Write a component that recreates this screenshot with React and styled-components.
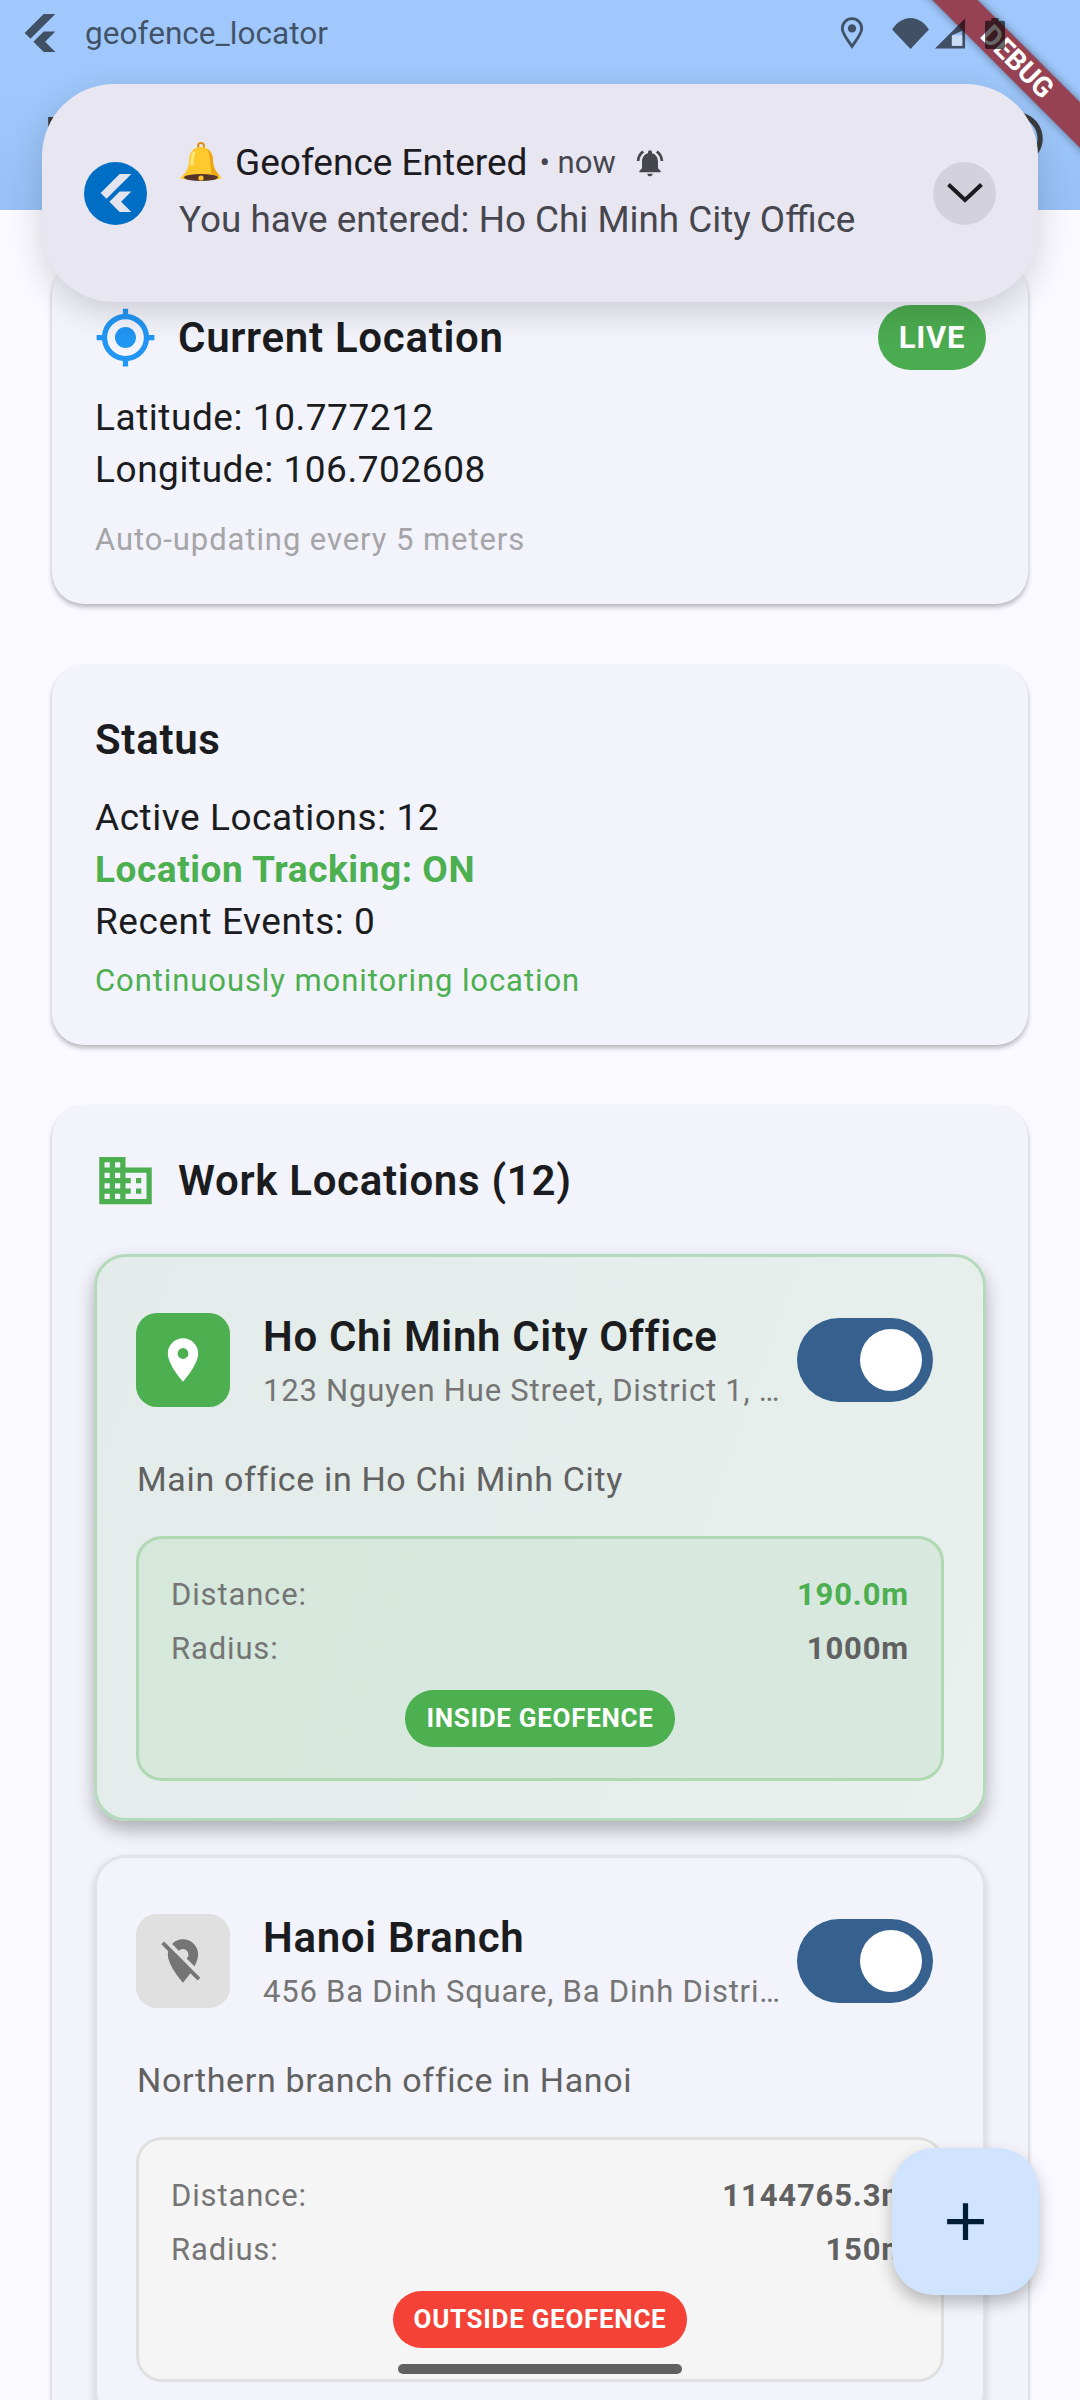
import styled, { createGlobalStyle } from "styled-components";
import {
    MdGpsFixed,
    MdLocationOn,
    MdLocationOff,
    MdBusiness,
    MdNotificationsActive,
    MdAdd,
    MdOutlineInfo,
} from "react-icons/md";

const GlobalStyle = createGlobalStyle`
    html, body {
        margin: 0;
        padding: 0;
        background: #f9f9ff;
        font-family: Roboto, "Noto Sans", sans-serif;
    }
    * {
        box-sizing: border-box;
    }
`;

const Screen = styled.div`
    position: relative;
    width: 1080px;
    height: 2400px;
    overflow: hidden;
    background: #f9f9ff;
`;

const Header = styled.header`
    background: linear-gradient(180deg, #a0c8fc 0%, #a0c8fc 40%, #97c1f5 100%);
    height: 210px;
`;

/* system bar is painted over the debug banner, the battery shows it */
const StatusBar = styled.div`
    position: relative;
    z-index: 3;
    display: flex;
    align-items: center;
    height: 66px;
    padding: 0 0 0 21px;
    color: rgba(0, 0, 0, 0.6);
`;

const StatusTitle = styled.span`
    margin-left: 26px;
    font-size: 31.6px;
    flex: 1;
`;

const StatusIcons = styled.div`
    display: flex;
    align-items: center;
    padding-right: 75px;
`;

const AppBar = styled.div`
    display: flex;
    justify-content: space-between;
    align-items: center;
    height: 144px;
    padding: 0 32px 0 44px;
    color: #3a3c40;
    font-size: 58px;
    font-weight: 500;
`;

const Content = styled.main`
    display: flex;
    flex-direction: column;
    gap: 61px;
    padding: 53px 52px 0;
`;

const Card = styled.section`
    background: #f2f3fb;
    border-radius: 32px;
    padding: 42px 42px 42px 43px;
    box-shadow: 0 3px 5px rgba(0, 0, 0, 0.28);
`;

const CardHeader = styled.div`
    display: flex;
    align-items: center;
    height: ${(p) => p.$height || 64}px;
    margin-bottom: ${(p) => p.$gap || 21}px;
`;

const CardTitle = styled.h2`
    margin: 0;
    font-size: 42px;
    font-weight: 600;
    letter-spacing: 0.7px;
    color: #1a1c20;
    flex: 1;
`;

const HeaderIcon = styled.span`
    display: flex;
    justify-content: flex-start;
    width: 84px;
    margin-left: -1px;
    color: ${(p) => p.$color};
    font-size: ${(p) => p.$size}px;
`;

const LivePill = styled.span`
    display: flex;
    align-items: center;
    justify-content: center;
    width: 108px;
    height: 65px;
    border-radius: 33px;
    background: #4bab50;
    color: #fff;
    font-size: 31px;
    font-weight: 700;
    letter-spacing: 0.8px;
`;

const Line = styled.div`
    font-size: 37px;
    line-height: 52px;
    letter-spacing: 0.55px;
    color: ${(p) => p.$color || "#1a1c20"};
    font-weight: ${(p) => (p.$bold ? 700 : 400)};
`;

const SmallLine = styled.div`
    margin-top: ${(p) => p.$top}px;
    font-size: 31px;
    line-height: 44px;
    letter-spacing: 0.92px;
    color: ${(p) => p.$color};
`;

const LocationList = styled.div`
    display: flex;
    flex-direction: column;
    gap: 34px;
    margin-left: -1px;
`;

const LocationCard = styled.article`
    border-radius: 32px;
    padding: 54px 39px 37px;
    border: 3px solid ${(p) => (p.$inside ? "#b5dabb" : "#e2e3e8")};
    background: ${(p) =>
        p.$inside
            ? "linear-gradient(110deg, #e3ecea 0%, #e5eeeb 60%, #e9f0ee 100%)"
            : "#f2f3fb"};
    box-shadow: ${(p) =>
        p.$inside
            ? "0 9px 18px rgba(0, 0, 0, 0.28)"
            : "0 4px 8px rgba(0, 0, 0, 0.14)"};
`;

const LocationRow = styled.div`
    display: flex;
    align-items: flex-start;
    height: 100px;
`;

const IconBox = styled.div`
    display: flex;
    align-items: center;
    justify-content: center;
    flex: none;
    width: 94px;
    height: 94px;
    margin-top: 2px;
    border-radius: 21px;
    font-size: 52px;
    background: ${(p) => (p.$inside ? "#4caf50" : "#e0e0e0")};
    color: ${(p) => (p.$inside ? "#fff" : "#757575")};
`;

const LocationText = styled.div`
    flex: 1;
    min-width: 0;
    margin: 0 8px 0 33px;
`;

const LocationName = styled.div`
    font-size: 42px;
    line-height: 52px;
    font-weight: 600;
    color: #1a1c20;
    letter-spacing: 0.67px;
`;

const LocationAddress = styled.div`
    margin-top: 8px;
    font-size: 31px;
    line-height: 40px;
    letter-spacing: 0.78px;
    color: #757575;
    white-space: nowrap;
    overflow: hidden;
    text-overflow: ellipsis;
`;

const Toggle = styled.div`
    display: flex;
    align-items: center;
    justify-content: flex-end;
    flex: none;
    width: 136px;
    height: 84px;
    margin: 7px 11px 0 0;
    padding-right: 11px;
    border-radius: 42px;
    background: #36618e;
`;

const Thumb = styled.div`
    width: 62px;
    height: 62px;
    border-radius: 50%;
    background: #fff;
`;

const Description = styled.div`
    margin: 42px 0 0 1px;
    font-size: 34px;
    line-height: 52px;
    letter-spacing: 0.65px;
    color: #616161;
`;

const InfoBox = styled.div`
    display: flex;
    flex-direction: column;
    height: 245px;
    margin-top: 31px;
    padding: 33px 32px 0;
    border-radius: 26px;
    border: 3px solid ${(p) => (p.$inside ? "#afd8b3" : "#e0e0e0")};
    background: ${(p) =>
        p.$inside ? "linear-gradient(110deg, #d6e8dc, #d8e8df)" : "#f5f5f5"};
`;

const InfoRow = styled.div`
    display: flex;
    justify-content: space-between;
    height: 46px;
    margin-bottom: 8px;
    line-height: 46px;
    font-size: 31px;
    letter-spacing: 0.85px;
    color: #757575;
`;

const InfoValue = styled.span`
    font-weight: 700;
    color: ${(p) => p.$color || "#616161"};
`;

const GeofencePill = styled.div`
    align-self: center;
    margin-top: 10px;
    padding: 0 21px;
    height: 57px;
    line-height: 57px;
    border-radius: 29px;
    background: ${(p) => (p.$inside ? "#4caf50" : "#f44336")};
    color: #fff;
    font-size: 26px;
    font-weight: 700;
    letter-spacing: 0.7px;
`;

const Notification = styled.div`
    position: absolute;
    top: 84px;
    left: 42px;
    display: flex;
    align-items: center;
    width: 996px;
    height: 218px;
    padding: 0 42px;
    border-radius: 72px;
    background: #e8e6f0;
    box-shadow: 0 10px 34px rgba(0, 0, 0, 0.16);
`;

const AppBadge = styled.div`
    display: flex;
    align-items: center;
    justify-content: center;
    flex: none;
    width: 63px;
    height: 63px;
    border-radius: 50%;
    background: #016ec6;
    color: #e4e4ee;
`;

const NotificationBody = styled.div`
    flex: 1;
    margin-left: 32px;
    padding-bottom: 5px;
`;

const NotificationTop = styled.div`
    display: flex;
    align-items: center;
    height: 58px;
    color: #46464f;
`;

const NotificationTitle = styled.span`
    margin-left: 12px;
    font-size: 37px;
    color: #1c1b21;
`;

const NotificationTime = styled.span`
    margin: 0 18px 0 12px;
    font-size: 31px;
`;

const NotificationText = styled.div`
    font-size: 36.85px;
    line-height: 56px;
    color: #46464f;
`;

const ExpandButton = styled.div`
    display: flex;
    align-items: center;
    justify-content: center;
    flex: none;
    width: 63px;
    height: 63px;
    border-radius: 50%;
    background: #d2d1dc;
    color: #1c1b21;
`;

const DebugBanner = styled.div`
    position: absolute;
    z-index: 2;
    top: 46px;
    left: 867px;
    width: 300px;
    height: 32px;
    line-height: 32px;
    text-align: center;
    transform: rotate(45deg);
    background: rgba(148, 28, 36, 0.78);
    color: #fff;
    font-size: 28px;
    font-weight: 700;
    box-shadow: 0 0 9px rgba(0, 0, 0, 0.45);
`;

const Fab = styled.div`
    position: absolute;
    top: 2148px;
    left: 892px;
    display: flex;
    align-items: center;
    justify-content: center;
    width: 147px;
    height: 147px;
    border-radius: 42px;
    background: #d1e4ff;
    color: #001d36;
    font-size: 63px;
    box-shadow: 0 8px 16px rgba(0, 0, 0, 0.25);
`;

const HomeIndicator = styled.div`
    position: absolute;
    top: 2364px;
    left: 398px;
    width: 284px;
    height: 10px;
    border-radius: 5px;
    background: #616161;
`;

function FlutterLogo({ size }) {
    return (
        <svg width={size} height={size} viewBox="0 0 24 24" fill="currentColor">
            <path d="M14.314 0L2.3 12 6 15.7 21.684.012h-7.357L14.314 0zm.014 11.072L7.857 17.53l6.47 6.47H21.7l-6.46-6.468 6.46-6.46h-7.37z" />
        </svg>
    );
}

function BellEmoji() {
    return (
        <svg width="44" height="42" viewBox="0 0 44 42">
            <circle cx="22" cy="4" r="3" fill="none" stroke="#d9911a" strokeWidth="2" />
            <path d="M22 5c-8 0-12 6-12 14 0 8-4 13-9 17 5 3 37 3 42 0-5-4-9-9-9-17 0-8-4-14-12-14z" fill="#fdc92f" />
            <path d="M28 7c4 2 6 7 6 12 0 6 3 11 7 15l-8-1c-2-6-1-20-5-26z" fill="#eda511" />
            <path d="M15 11c-2 3-2 8-2 11" fill="none" stroke="#ffe97e" strokeWidth="3" strokeLinecap="round" />
            <ellipse cx="22" cy="35.5" rx="17" ry="3.4" fill="#55362a" />
            <circle cx="22" cy="36" r="2.6" fill="#fdc92f" />
        </svg>
    );
}

function Chevron() {
    return (
        <svg width="36" height="20" viewBox="0 0 36 20" fill="none" stroke="currentColor" strokeWidth="4">
            <path d="M1.500 1.500L18 17 34.500 1.500" />
        </svg>
    );
}

function StatusGlyphs() {
    return (
        <StatusIcons>
            <svg width="24" height="33" viewBox="0 0 26 34" fill="none" stroke="currentColor" strokeWidth="3">
                <path d="M13 31C7 22 2.5 17 2.5 11.5a10.5 10.5 0 0 1 21 0C23.500 17 19 22 13 31z" />
                <circle cx="13" cy="11.500" r="4.500" fill="currentColor" stroke="none" />
            </svg>
            <svg width="39" height="33" viewBox="0 0 40 34" fill="currentColor" style={{ marginLeft: 27 }}>
                <path d="M20 33L1 13C6 5 13 1 20 1s14 4 19 12z" />
            </svg>
            <svg width="32" height="33" viewBox="0 0 34 34" fill="currentColor" style={{ marginLeft: 4 }}>
                <path fillRule="evenodd" d="M33 1v32H1zM19 19v11h11V14z" />
                <path d="M19 19h11v11H19z" fill="#c9ddf6" />
            </svg>
            <svg width="20" height="33" viewBox="0 0 22 34" fill="currentColor" style={{ marginLeft: 19 }}>
                <path d="M7 0h8v3h5a2 2 0 0 1 2 2v27a2 2 0 0 1-2 2H2a2 2 0 0 1-2-2V5a2 2 0 0 1 2-2h5z" />
            </svg>
        </StatusIcons>
    );
}

const locations = [
    {
        name: "Ho Chi Minh City Office",
        address: "123 Nguyen Hue Street, District 1, Ho Chi Minh City",
        description: "Main office in Ho Chi Minh City",
        distance: "190.0m",
        radius: "1000m",
        inside: true,
    },
    {
        name: "Hanoi Branch",
        address: "456 Ba Dinh Square, Ba Dinh District, Hanoi",
        description: "Northern branch office in Hanoi",
        distance: "1144765.3m",
        radius: "150m",
        inside: false,
    },
];

function LocationItem({ item }) {
    return (
        <LocationCard $inside={item.inside}>
            <LocationRow>
                <IconBox $inside={item.inside}>
                    {item.inside ? <MdLocationOn /> : <MdLocationOff />}
                </IconBox>
                <LocationText>
                    <LocationName>{item.name}</LocationName>
                    <LocationAddress>{item.address}</LocationAddress>
                </LocationText>
                <Toggle>
                    <Thumb />
                </Toggle>
            </LocationRow>
            <Description>{item.description}</Description>
            <InfoBox $inside={item.inside}>
                <InfoRow>
                    <span>Distance:</span>
                    <InfoValue $color={item.inside ? "#4caf50" : undefined}>{item.distance}</InfoValue>
                </InfoRow>
                <InfoRow>
                    <span>Radius:</span>
                    <InfoValue>{item.radius}</InfoValue>
                </InfoRow>
                <GeofencePill $inside={item.inside}>
                    {item.inside ? "INSIDE GEOFENCE" : "OUTSIDE GEOFENCE"}
                </GeofencePill>
            </InfoBox>
        </LocationCard>
    );
}

function App() {
    return (
        <Screen>
            <GlobalStyle />
            <Header>
                <StatusBar>
                    <FlutterLogo size={38} />
                    <StatusTitle>geofence_locator</StatusTitle>
                    <StatusGlyphs />
                </StatusBar>
                <AppBar>
                    <span>Flutter Geofence</span>
                    <MdOutlineInfo size={63} />
                </AppBar>
            </Header>
            <Content>
                <Card>
                    <CardHeader $height={65} $gap={22}>
                        <HeaderIcon $color="#2196f3" $size={63}>
                            <MdGpsFixed />
                        </HeaderIcon>
                        <CardTitle>Current Location</CardTitle>
                        <LivePill>LIVE</LivePill>
                    </CardHeader>
                    <Line>Latitude: 10.777212</Line>
                    <Line>Longitude: 106.702608</Line>
                    <SmallLine $top={22} $color="#a5a5a8">
                        Auto-updating every 5 meters
                    </SmallLine>
                </Card>
                <Card>
                    <CardHeader>
                        <CardTitle>Status</CardTitle>
                    </CardHeader>
                    <Line>Active Locations: 12</Line>
                    <Line $color="#4caf50" $bold>
                        Location Tracking: ON
                    </Line>
                    <Line>Recent Events: 0</Line>
                    <SmallLine $top={11} $color="#4caf50">
                        Continuously monitoring location
                    </SmallLine>
                </Card>
                <Card>
                    <CardHeader $gap={42}>
                        <HeaderIcon $color="#4caf50" $size={63}>
                            <MdBusiness />
                        </HeaderIcon>
                        <CardTitle>Work Locations (12)</CardTitle>
                    </CardHeader>
                    <LocationList>
                        {locations.map((item) => (
                            <LocationItem key={item.name} item={item} />
                        ))}
                    </LocationList>
                </Card>
            </Content>
            <Notification>
                <AppBadge>
                    <FlutterLogo size={38} />
                </AppBadge>
                <NotificationBody>
                    <NotificationTop>
                        <BellEmoji />
                        <NotificationTitle>Geofence Entered</NotificationTitle>
                        <NotificationTime>• now</NotificationTime>
                        <MdNotificationsActive size={32} />
                    </NotificationTop>
                    <NotificationText>You have entered: Ho Chi Minh City Office</NotificationText>
                </NotificationBody>
                <ExpandButton>
                    <Chevron />
                </ExpandButton>
            </Notification>
            <Fab>
                <MdAdd />
            </Fab>
            <HomeIndicator />
            <DebugBanner>DEBUG</DebugBanner>
        </Screen>
    );
}

export default App;
